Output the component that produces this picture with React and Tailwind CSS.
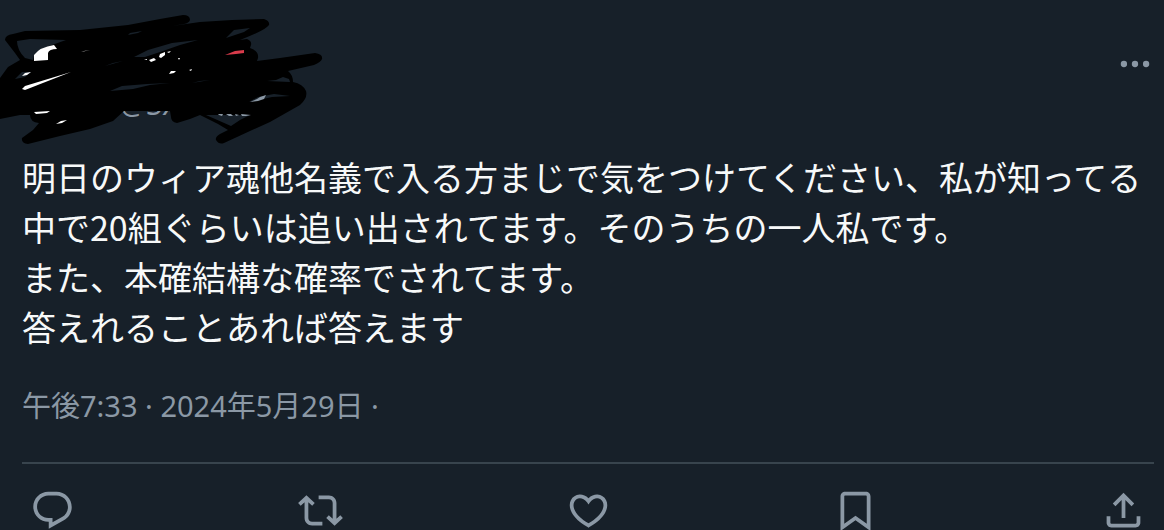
const actions = [
  {
    label: '返信',
    path: 'M1.751 10c0-4.42 3.584-8 8.005-8h4.366c4.49 0 8.129 3.64 8.129 8.13 0 2.96-1.607 5.68-4.196 7.11l-8.054 4.46v-3.69h-.067c-4.49.1-8.183-3.51-8.183-8.01zm8.005-6c-3.317 0-6.005 2.69-6.005 6 0 3.37 2.77 6.08 6.138 6.01l.351-.01h1.761v2.3l5.087-2.81c1.951-1.08 3.163-3.13 3.163-5.36 0-3.39-2.744-6.13-6.129-6.13H9.756z',
  },
  {
    label: 'リポスト',
    path: 'M4.5 3.88l4.432 4.14-1.364 1.46L5.5 7.55V16c0 1.1.896 2 2 2H13v2H7.5c-2.209 0-4-1.79-4-4V7.55L1.432 9.48.068 8.02 4.5 3.88zM16.5 6H11V4h5.5c2.209 0 4 1.79 4 4v8.45l2.068-1.93 1.364 1.46-4.432 4.14-4.432-4.14 1.364-1.46 2.068 1.93V8c0-1.1-.896-2-2-2z',
  },
  {
    label: 'いいね',
    path: 'M16.697 5.5c-1.222-.06-2.679.51-3.89 2.16l-.805 1.09-.806-1.09C9.984 6.01 8.526 5.44 7.304 5.5c-1.243.07-2.349.78-2.91 1.91-.552 1.12-.633 2.78.479 4.82 1.074 1.97 3.257 4.27 7.129 6.61 3.87-2.34 6.052-4.64 7.126-6.61 1.111-2.04 1.03-3.7.477-4.82-.561-1.13-1.666-1.84-2.908-1.91zm4.187 7.69c-1.351 2.48-4.001 5.12-8.379 7.67l-.503.3-.504-.3c-4.379-2.55-7.029-5.19-8.382-7.67-1.36-2.5-1.41-4.86-.514-6.67.887-1.79 2.647-2.91 4.601-3.01 1.651-.09 3.368.56 4.798 2.01 1.429-1.45 3.146-2.1 4.796-2.01 1.954.1 3.714 1.22 4.601 3.01.896 1.81.846 4.17-.514 6.67z',
  },
  {
    label: 'ブックマーク',
    path: 'M4 4.5C4 3.12 5.119 2 6.5 2h11C18.881 2 20 3.12 20 4.5v18.44l-8-5.71-8 5.71V4.5zM6.5 4c-.276 0-.5.22-.5.5v14.56l6-4.29 6 4.29V4.5c0-.28-.224-.5-.5-.5h-11z',
  },
  {
    label: '共有',
    path: 'M12 2.59l5.7 5.7-1.41 1.42L13 6.41V16h-2V6.41l-3.3 3.3-1.41-1.42L12 2.59zM21 15l-.02 3.51c0 1.38-1.12 2.49-2.5 2.49H5.5C4.11 21 3 19.88 3 18.5V15h2v3.5c0 .28.22.5.5.5h12.98c.28 0 .5-.22.5-.5L19 15h2z',
  },
];

const Scribble = () => (
  <svg viewBox="0 0 330 150" className="absolute top-0 left-0 w-[330px] h-[150px]" aria-hidden="true">
    <path
      fill="#000"
      d="M5 40Q5 35 13 34L25 31L80 30L128 25L160 19L183 15Q190 15 190 20Q189 23 184 24L172 26L200 22L232 20L264 19Q270 21 269 25Q266 30 240 40L247 39Q252 41 251 45L250 48Q259 51 258 58L257 61L280 58L315 53Q323 54 322 59Q321 62 314 65L288 71Q293 75 293 82Q303 84 306 91Q308 98 300 105L270 122L250 131L224 143Q219 145 216 140Q215 137 220 134L228 130L218 124L200 115L190 119L177 123Q171 122 171 117L170 111L124 111L113 121L90 129L60 136L28 144Q21 143 22 138L33 130L39 123Q30 122 30 115L20 115L0 119V78L8 67L20 60L15 53Z"
    />
    {/* background showing between the strokes */}
    <g fill="#172029">
      <path d="M17 41L30 39L66 40L52 45L40 50L34 56L33 60L25 58Q17 50 17 41Z" />
      <path d="M15 79L22 72L31 72L25 77Z" />
      <path d="M110 91L122 86L147 84L170 83L150 85L133 89Z" />
      <path d="M128 35L130 33L142 31L138 33Z" />
      <path d="M134 57L148 50L172 43L198 40L180 45L163 51L145 57Z" />
      <path d="M226 38L234 30L250 28L244 32Z" />
      <path d="M267 81L276 80L283 77L289 79L290 82Z" />
      <path d="M249 102L258 97L274 94L290 96L272 97Z" />
      <path d="M206 115L250 115L240 120L231 126Z" />
      <path d="M105 66L123 61L113 63Z" />
      <path d="M192 83L210 80L200 81Z" />
    </g>
    <g fill="#fff">
      <path d="M34 55Q40 47 54 45L57 49Q49 49 48 53L48 60L34 61Z" />
      <path d="M22 89L25 86L48 79L71 72L48 81L25 90Z" />
      <path d="M34 112L50 111L47 113L36 114Z" />
      <path d="M22 76L25 73L31 72L27 75Z" />
      <path d="M56 124L61 121L67 120L62 123Z" />
      <path d="M81 52L90 50L84 51Z" />
      <path d="M149 60L154 58L156 60L151 62ZM159 57L160 54L165 52L165 55L161 58ZM144 60L147 59L147 60ZM167 52L171 51L169 53Z" />
      <path d="M169 74L171 71L176 71L174 73Z" />
      <path d="M178 58L180 58L179 60Z" />
      <path d="M189 70L192 69L191 71Z" />
    </g>
    <path fill="#d93b4b" d="M225 55L235 51L244 50L244 53L236 54Z" />
    <g fill="#8b98a5">
      <path d="M250 102L257 99L260 97L266 95L264 99L258 101Z" />
      <path d="M218 114L223 114L222 116L219 115ZM226 114L231 114L233 116L229 116ZM235 114L239 115L236 116ZM241 114L251 115L246 116L242 116Z" />
    </g>
  </svg>
);

const App = () => {
  return (
    <main
      lang="ja"
      className="h-screen overflow-hidden bg-[#172029] pl-[22px] pr-[10px] font-['Noto_Sans','Noto_Sans_CJK_JP',sans-serif] text-[#8b98a5]"
    >
      <article>
        <header className="flex h-[152px] items-start justify-between">
          <div className="pt-[84px] pl-[98px]">
            <span className="text-[29px] leading-10">@Sx</span>
            <Scribble />
          </div>
          <button type="button" aria-label="もっと見る" className="mt-[45px]">
            <svg viewBox="0 0 24 24" className="size-[38px]" fill="currentColor">
              <circle cx="5" cy="12" r="2" />
              <circle cx="12" cy="12" r="2" />
              <circle cx="19" cy="12" r="2" />
            </svg>
          </button>
        </header>

        <p className="font-['Noto_Sans_CJK_JP',sans-serif] text-[34px] leading-[50px] text-[#f7f9f9]">
          明日のウィア魂他名義で入る方まじで気をつけてください、私が知ってる中で20組ぐらいは追い出されてます。そのうちの一人私です。
          <br />
          また、本確結構な確率でされてます。
          <br />
          答えれることあれば答えます
        </p>

        <div className="mt-[34px] border-b-2 border-[#38444d] pb-9 text-[29px] leading-10">
          <time dateTime="2024-05-29T19:33">午後7:33 · 2024年5月29日</time> ·
        </div>

        <div className="flex justify-between pt-6 pr-2 pl-2">
          {actions.map(({ label, path }) => (
            <button key={label} type="button" aria-label={label}>
              <svg viewBox="0 0 24 24" className="size-[45px]" fill="currentColor">
                <path d={path} />
              </svg>
            </button>
          ))}
        </div>
      </article>
    </main>
  );
};

export default App;
